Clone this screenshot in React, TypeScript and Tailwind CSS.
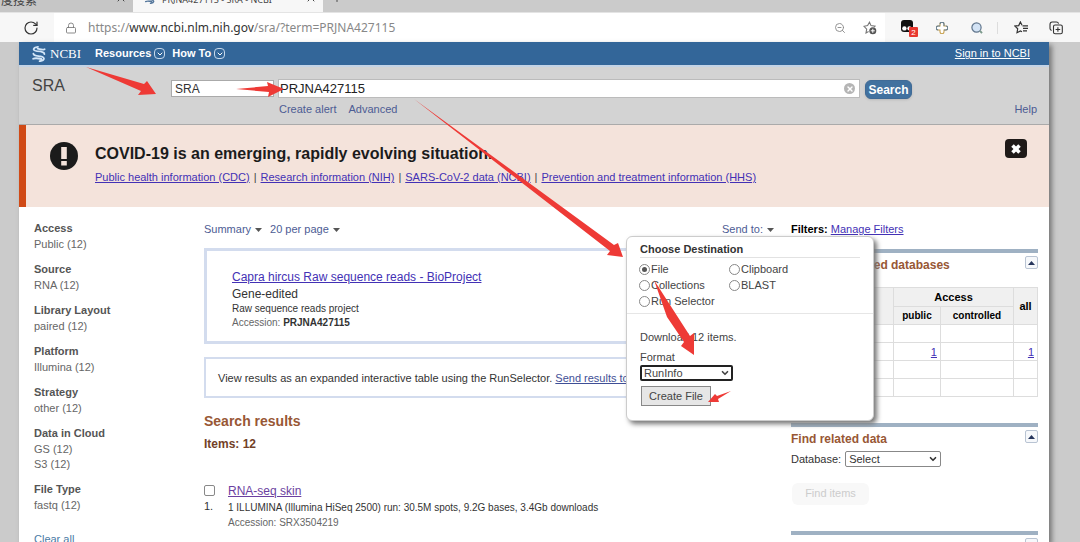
import React from "react";
import {
  ChevronDown,
  Lock,
  Plus,
  RotateCw,
  X,
  ZoomOut,
} from "lucide-react";

const filters = [
  { title: "Access", items: ["Public (12)"] },
  { title: "Source", items: ["RNA (12)"] },
  { title: "Library Layout", items: ["paired (12)"] },
  { title: "Platform", items: ["Illumina (12)"] },
  { title: "Strategy", items: ["other (12)"] },
  { title: "Data in Cloud", items: ["GS (12)", "S3 (12)"] },
  { title: "File Type", items: ["fastq (12)"] },
];

const covidLinks = [
  "Public health information (CDC)",
  "Research information (NIH)",
  "SARS-CoV-2 data (NCBI)",
  "Prevention and treatment information (HHS)",
];

const destinations = ["File", "Clipboard", "Collections", "BLAST", "Run Selector"];

function Caret() {
  return (
    <svg width="7" height="4" viewBox="0 0 7 4" className="mt-px" aria-hidden="true">
      <path d="M0 0h7L3.5 4z" fill="#555" />
    </svg>
  );
}

function Helix({ color, className }: { color: string; className?: string }) {
  return (
    <svg viewBox="0 0 14 16" className={className} aria-hidden="true">
      <path
        d="M6 0.9C0.4 1.6 0.4 4.6 5 5.2 9.6 5.6 12.6 6 12.4 8.2M12.6 3.2C10.4 4.4 8.4 3.2 5.6 2.6M1.4 7.6C1.6 10 5 9.8 8.6 10.4 13.4 11.2 13 14.6 7.6 15.2M1.2 12.8C3.4 11.6 6 12.2 9.4 13"
        fill="none"
        stroke={color}
        strokeWidth="1.8"
        strokeLinecap="round"
      />
    </svg>
  );
}

function BrowserTabs() {
  return (
    <div className="flex h-3 shrink-0 items-end overflow-hidden bg-[#cbcbcb] text-[12px] leading-4 text-[#444]">
      <div className="flex h-5 w-[133px] items-start justify-between bg-[#c6c6c6]">
        <span className="flex h-4 w-[37px] justify-end font-['Noto_Sans_CJK_SC',sans-serif] whitespace-nowrap">
          百度搜索
        </span>
        <X className="mr-1.5 h-3 w-3" strokeWidth={2} />
      </div>
      <div className="flex h-5 w-[190px] items-start bg-[#f7f7f7] pl-[11px]">
        <Helix color="#55779c" className="h-3 w-3" />
        <span className="ml-[6px] flex-1 font-['Noto_Sans',sans-serif] text-[9px] whitespace-nowrap">
          PRJNA427115 - SRA - NCBI
        </span>
        <X className="mr-1.5 h-3 w-3" strokeWidth={2} />
      </div>
      <div className="flex h-5 flex-1 items-start pl-2">
        <Plus className="h-3 w-3" strokeWidth={2} />
      </div>
    </div>
  );
}

function AddressBar() {
  return (
    <div className="flex h-[30px] shrink-0 items-center border-t border-[#e4e4e4] bg-[#f7f7f7] text-[#555]">
      <button aria-label="Reload" className="ml-[23px]">
        <RotateCw className="h-4 w-4 text-[#333]" strokeWidth={1.8} />
      </button>
      <div className="ml-[15px] flex h-full min-w-0 flex-1 items-center bg-white pr-2 pl-[11px]">
        <Lock className="h-3 w-3 text-[#777]" strokeWidth={1.7} />
        <span className="ml-[11px] flex-1 font-['Noto_Sans',sans-serif] text-[12px] text-[#888]">
          https://<span className="text-[#333]">www.ncbi.nlm.nih.gov</span>/sra/?term=PRJNA427115
        </span>
        <button aria-label="Zoom out" className="mr-[17px]">
          <ZoomOut className="h-3 w-3 text-[#888]" strokeWidth={1.8} />
        </button>
        <button aria-label="Add to favorites">
          <svg className="h-[14px] w-[14px]" viewBox="0 0 14 14" aria-hidden="true">
            <path
              d="M5.6 10.4 3 11.9l.7-3.8L1 5.3l3.6-.7 1.9-3.4L8 4.6l4 .5-.8 1"
              fill="none"
              stroke="#777"
              strokeWidth="1.1"
            />
            <circle cx="9.8" cy="9.8" r="3.5" fill="#555" />
            <path d="M9.8 7.8v4M7.8 9.8h4" stroke="#fff" strokeWidth="1" />
          </svg>
        </button>
      </div>
      <div className="flex items-center pr-[17px] pl-4">
        <button aria-label="Extension, 2 notices" className="flex items-end">
          <svg className="h-[18px] w-[17px]" viewBox="0 0 17 18" aria-hidden="true">
            <rect x="0" y="1" width="12" height="12" rx="3" fill="#111" />
            <circle cx="3.4" cy="9.4" r="2.2" fill="#fff" />
            <circle cx="8.4" cy="9.4" r="2.1" fill="#fff" />
            <rect x="8" y="8" width="9" height="10" rx="1" fill="#e8382f" />
            <text x="12.5" y="16" fontSize="8" fill="#fff" textAnchor="middle" fontFamily="Liberation Sans, sans-serif">
              2
            </text>
          </svg>
        </button>
        <button aria-label="Plus extension" className="ml-[18px]">
          <svg className="h-3 w-3" viewBox="0 0 12 12" aria-hidden="true">
            <path
              d="M4 4V2.2a2 2 0 0 1 4 0V4h1.8a2 2 0 0 1 0 4H8v1.8a2 2 0 0 1-4 0V8H2.2a2 2 0 0 1 0-4z"
              fill="#fff"
              stroke="#c9a352"
              strokeWidth="1.1"
            />
            <path d="M8 4V2.2a2 2 0 0 0-4 0M4 4H2.2a2 2 0 0 0 0 4M8 8h1.8a2 2 0 0 0 0-4" fill="none" stroke="#66819a" strokeWidth="1.1" />
          </svg>
        </button>
        <button aria-label="Search extension" className="ml-[23px]">
          <svg className="h-3 w-3" viewBox="0 0 12 12" aria-hidden="true">
            <circle cx="5.5" cy="5.5" r="4.6" fill="#d3e3f5" stroke="#5f748c" strokeWidth="1.2" />
            <path d="m9 8.8 2 2.4" stroke="#7c9a8c" strokeWidth="1.8" />
          </svg>
        </button>
        <span className="ml-[14px] h-3 w-px bg-[#ddd]" />
        <button aria-label="Favorites" className="ml-4">
          <svg className="h-[13px] w-[14px]" viewBox="0 0 14 13" fill="none" stroke="#333" strokeWidth="1.2" aria-hidden="true">
            <path d="M8 4.2 6.4 1 4.7 4.6.9 5.1l2.8 2.7-.7 3.9 3.4-1.8 1.6.8M8.5 4.8H14M9 7.3h5M9 9.8h4" />
          </svg>
        </button>
        <button aria-label="Collections" className="ml-[21px]">
          <svg className="h-[14px] w-[14px]" viewBox="0 0 14 14" fill="none" stroke="#333" strokeWidth="1.1" aria-hidden="true">
            <rect x="4.5" y="4" width="8.8" height="8.8" rx="1.6" />
            <path d="M8.9 6.2v4.6M6.6 8.5h4.6M2.6 9.6C1.6 9.2 1 8.6 1 7.6V3.4C1 2 1.8 1 3.2 1h4.2c1.2 0 1.9.6 2.2 1.6" />
          </svg>
        </button>
      </div>
    </div>
  );
}

function NavItem({ label }: { label: string }) {
  return (
    <button className="flex items-center gap-[3px] font-bold">
      {label}
      <span className="flex h-[11px] w-[11px] items-center justify-center rounded-sm border border-[#c7d8ea]">
        <ChevronDown className="h-2 w-2" strokeWidth={3} />
      </span>
    </button>
  );
}

function SiteHeader() {
  return (
    <header>
      <div className="flex h-[23px] items-center bg-[#336699] pr-[19px] pl-[13px] text-[11px] text-white">
        <a href="#ncbi" className="flex items-center gap-1">
          <Helix color="#d3e6f8" className="h-4 w-[14px]" />
          <span className="font-['Liberation_Serif',serif] text-[13px]">NCBI</span>
        </a>
        <nav className="ml-[14px] flex flex-1 gap-[7px]">
          <NavItem label="Resources" />
          <NavItem label="How To" />
        </nav>
        <a href="#signin" className="underline">
          Sign in to NCBI
        </a>
      </div>
      <div className="flex h-[60px] border-t-2 border-b border-t-[#c3d3e6] border-b-[#aaa] bg-[#d3d3d3] pl-[13px]">
        <h1 className="w-[139px] pt-[9px] text-[16px] leading-5 text-[#444]">SRA</h1>
        <div className="min-w-0 flex-1 pt-3">
          <form className="flex" onSubmit={(e) => e.preventDefault()}>
            <select
              aria-label="Database"
              className="mt-px h-[17px] w-[103px] appearance-none border border-[#aaa] bg-white pl-[3px] text-[12px] leading-[14px] text-[#333]"
            >
              <option>SRA</option>
            </select>
            <div className="ml-1 flex h-[19px] min-w-0 flex-1 items-center border border-[#bbb] bg-white pr-1">
              <input
                aria-label="Search term"
                defaultValue="PRJNA427115"
                className="min-w-0 flex-1 pl-px text-[13px] leading-4 text-[#222]"
              />
              <button
                type="button"
                aria-label="Clear"
                className="flex h-[11px] w-[11px] items-center justify-center rounded-full bg-[#b5b5b5] text-white"
              >
                <X className="h-2 w-2" strokeWidth={4} />
              </button>
            </div>
            <button className="mt-px mr-[137px] ml-[5px] h-[19px] w-[47px] rounded-md border border-[#3f6a96] bg-[#41719f] text-[12px] leading-4 font-bold text-white shadow">
              Search
            </button>
          </form>
          <div className="flex gap-3 pt-px pr-3 pl-[108px] text-[11px] leading-[18px] text-[#4d5c94]">
            <a href="#alert">Create alert</a>
            <a href="#advanced" className="flex-1">
              Advanced
            </a>
            <a href="#help">Help</a>
          </div>
        </div>
      </div>
    </header>
  );
}

function CovidBanner() {
  return (
    <section className="flex h-[82px] items-start border-l-[7px] border-[#d04a16] bg-[#f4e3db] pr-[22px] pl-6">
      <svg className="mt-[17px] h-7 w-7" viewBox="0 0 28 28" aria-hidden="true">
        <circle cx="14" cy="14" r="14" fill="#1b1b1b" />
        <path d="M11.2 5h5.6v12h-5.6zM11.2 19h5.6v4.5h-5.6z" fill="#f4e3db" />
      </svg>
      <div className="ml-[17px] flex-1 pt-[18px]">
        <h2 className="text-[16px] leading-[22px] font-bold text-[#1b1b1b]">
          COVID-19 is an emerging, rapidly evolving situation.
        </h2>
        <p className="mt-1 flex text-[11px] leading-4">
          {covidLinks.map((label, i) => (
            <React.Fragment key={label}>
              {i > 0 && <span className="px-1 text-[#444]">|</span>}
              <a href="#covid" className="text-[#4331b5] underline">
                {label}
              </a>
            </React.Fragment>
          ))}
        </p>
      </div>
      <button
        aria-label="Close"
        className="mt-[14px] flex h-[19px] w-[22px] items-center justify-center rounded-sm bg-[#1f1a18] text-white"
      >
        <X className="h-[14px] w-[14px]" strokeWidth={6} strokeLinecap="butt" />
      </button>
    </section>
  );
}

function Sidebar() {
  return (
    <aside className="flex w-[170px] shrink-0 flex-col gap-[9px] pt-[13px] text-[11px] text-[#666]">
      {filters.map((group) => (
        <div key={group.title}>
          <h3 className="pb-px leading-4 font-bold text-[#555]">{group.title}</h3>
          {group.items.map((item) => (
            <a key={item} href="#filter" className="block leading-[15px]">
              {item}
            </a>
          ))}
        </div>
      ))}
      <a href="#clear" className="mt-[9px] leading-4 text-[#4a7ba5]">
        Clear all
      </a>
    </aside>
  );
}

function SendMenu() {
  return (
    <div className="absolute top-[15px] -right-[100px] z-10 h-[185px] w-[248px] rounded-md border border-[#ccc] bg-white pt-1 text-[11px] text-[#444] shadow-[3px_3px_5px_#777]">
      <div className="px-[13px]">
        <h3 className="border-b border-[#e2e2e2] leading-4 font-bold text-[#333]">Choose Destination</h3>
      </div>
      <fieldset className="grid grid-cols-[90px_1fr] border-b border-[#e6e6e6] pt-[3px] pb-1 pl-3">
        {destinations.map((name, i) => (
          <label key={name} className="flex items-center gap-px leading-4">
            <input
              type="radio"
              name="destination"
              defaultChecked={i === 0}
              className="h-[11px] w-[11px] appearance-none rounded-full border border-[#888] bg-white bg-clip-content p-[2px] checked:bg-[#555]"
            />
            {name}
          </label>
        ))}
      </fieldset>
      <div className="px-[13px] pt-[15px]">
        <p className="leading-4">Download 12 items.</p>
        <label htmlFor="format" className="mt-1 block leading-4">
          Format
        </label>
        <div className="grid w-[93px] items-center">
          <select
            id="format"
            className="col-start-1 row-start-1 h-4 appearance-none rounded-xs border-2 border-[#222] bg-white pl-[2px] text-[11px] leading-3"
          >
            <option>RunInfo</option>
          </select>
          <ChevronDown
            className="pointer-events-none col-start-1 row-start-1 mr-[3px] h-[10px] w-[10px] justify-self-end"
            strokeWidth={4}
          />
        </div>
        <button className="mt-[5px] ml-px h-5 w-[70px] border border-[#888] bg-[#e6e6e6] text-[11px] leading-4">
          Create File
        </button>
      </div>
    </div>
  );
}

function Results() {
  return (
    <main className="min-w-0 flex-1 text-[11px] text-[#333]">
      <div className="flex gap-2 pt-[14px] text-[#4d5c94]">
        <button className="flex items-center gap-1 leading-4">
          Summary <Caret />
        </button>
        <button className="flex items-center gap-1 leading-4">
          20 per page <Caret />
        </button>
        <div className="relative ml-auto">
          <button className="flex items-center gap-1 leading-4">
            Send to: <Caret />
          </button>
          <SendMenu />
        </div>
      </div>
      <section className="mt-[11px] h-[96px] border-[3px] border-[#d3dcee] pt-[17px] pl-[25px]">
        <a href="#bioproject" className="block text-[12px] leading-[18px] text-[#4331b5] underline">
          Capra hircus Raw sequence reads - BioProject
        </a>
        <p className="text-[12px] leading-4">Gene-edited</p>
        <p className="text-[10px] leading-[14px]">Raw sequence reads project</p>
        <p className="text-[10px] leading-[14px] text-[#666]">
          Accession: <b className="text-[#333]">PRJNA427115</b>
        </p>
      </section>
      <section className="mt-[13px] h-[41px] border-2 border-[#d3dcee] pt-[11px] pl-3 text-[11px] leading-4">
        View results as an expanded interactive table using the RunSelector.{" "}
        <a href="#runselector" className="text-[#3f4f96] underline">
          Send results to Run selector
        </a>
      </section>
      <h2 className="mt-[14px] text-[14px] leading-[18px] font-bold text-[#985735]">Search results</h2>
      <h3 className="mt-[6px] text-[12px] leading-4 font-bold text-[#724128]">Items: 12</h3>
      <article className="mt-[30px] flex">
        <div className="w-6">
          <input
            type="checkbox"
            aria-label="Select RNA-seq skin"
            className="mt-[3px] block h-[11px] w-[11px] appearance-none rounded-xs border border-[#888] bg-white"
          />
          <span className="mt-[2px] block leading-4">1.</span>
        </div>
        <div>
          <a href="#rna" className="block text-[12px] leading-[18px] text-[#6b3fa0] underline">
            RNA-seq skin
          </a>
          <p className="text-[10px] leading-4">
            1 ILLUMINA (Illumina HiSeq 2500) run: 30.5M spots, 9.2G bases, 3.4Gb downloads
          </p>
          <p className="text-[10px] leading-[14px] text-[#666]">Accession: SRX3504219</p>
        </div>
      </article>
    </main>
  );
}

function PanelHeading({ children }: { children: React.ReactNode }) {
  return (
    <div className="flex items-start justify-between border-t-4 border-[#9fb1c3] pt-[3px]">
      <h3 className="pt-px text-[12px] leading-4 font-bold text-[#985735]">{children}</h3>
      <button
        aria-label="Collapse"
        className="flex h-[13px] w-[13px] items-center justify-center rounded-xs border border-[#b9c4d3] bg-[#f6f8fb]"
      >
        <svg width="7" height="4" viewBox="0 0 7 4" aria-hidden="true">
          <path d="M0 4h7L3.5 0z" fill="#26355c" />
        </svg>
      </button>
    </div>
  );
}

function RelatedColumn() {
  const rows = ["", "1", "", ""];
  return (
    <aside className="ml-[17px] w-[247px] shrink-0 pt-[14px] text-[11px] text-[#333]">
      <p className="mb-3 leading-4">
        <b className="text-black">Filters:</b>{" "}
        <a href="#filters" className="text-[#4331b5] underline">
          Manage Filters
        </a>
      </p>
      <PanelHeading>Search in related databases</PanelHeading>
      <table className="mt-[14px] w-full table-fixed border-collapse border border-[#ddd] [&_td]:border [&_td]:border-[#ddd] [&_th]:border [&_th]:border-[#ddd]">
        <colgroup>
          <col />
          <col className="w-[47px]" />
          <col className="w-[73px]" />
          <col className="w-[24px]" />
        </colgroup>
        <thead className="bg-[#f0f0f0] text-black">
          <tr className="h-[19px] leading-4">
            <th rowSpan={2}>Database</th>
            <th colSpan={2}>Access</th>
            <th rowSpan={2}>all</th>
          </tr>
          <tr className="h-[18px] text-[10px] leading-4">
            <th>public</th>
            <th>controlled</th>
          </tr>
        </thead>
        <tbody>
          {rows.map((count, i) => (
            <tr key={i} className="h-[18px] text-right leading-4">
              <td />
              <td className="pr-[3px]">
                {count && (
                  <a href="#public" className="text-[#4331b5] underline">
                    {count}
                  </a>
                )}
              </td>
              <td />
              <td className="pr-[3px]">
                {count && (
                  <a href="#all" className="text-[#4331b5] underline">
                    {count}
                  </a>
                )}
              </td>
            </tr>
          ))}
        </tbody>
      </table>
      <div className="mt-[26px]">
        <PanelHeading>Find related data</PanelHeading>
        <div className="mt-1 flex items-center">
          <label htmlFor="related">Database:</label>
          <div className="ml-1 grid w-24 items-center">
            <select
              id="related"
              className="col-start-1 row-start-1 h-4 appearance-none rounded-xs border border-[#888] bg-white pl-[3px] text-[11px] leading-3"
            >
              <option>Select</option>
            </select>
            <ChevronDown
              className="pointer-events-none col-start-1 row-start-1 mr-[3px] h-[10px] w-[10px] justify-self-end"
              strokeWidth={4}
            />
          </div>
        </div>
        <button className="mt-[15px] ml-px h-[22px] w-[77px] rounded-md bg-[#f8f8f8] text-[#ccc]">Find items</button>
      </div>
      <div className="mt-[26px]">
        <PanelHeading>Search details</PanelHeading>
      </div>
    </aside>
  );
}

function Annotations() {
  return (
    <svg
      className="pointer-events-none absolute top-0 left-0 z-20 h-[542px] w-[1080px]"
      viewBox="0 0 1080 542"
      fill="#ee3a36"
      aria-hidden="true"
    >
      <path d="M86 67 144 84 147 81 156 94 138 95 141 91Z" />
      <path d="M236 89 268 86 267 82 284 89 268 97 269 92Z" />
      <path d="M414 99 614 245 618 243 623 257 607 255 610 251Z" />
      <path d="M654 280 690 336 694 333 694 355 681 346 684 342 667 317Z" />
      <path d="M731 391 717 396 715 394 708 402 719 402 718 399Z" />
    </svg>
  );
}

export default function App() {
  return (
    <div className="relative flex h-screen flex-col overflow-hidden bg-[#cbcbcb] font-['Liberation_Sans',Arial,sans-serif]">
      <BrowserTabs />
      <AddressBar />
      <div className="mr-[31px] ml-[19px] min-h-0 flex-1 bg-white shadow-[3px_3px_5px_#777]">
        <SiteHeader />
        <CovidBanner />
        <div className="flex pr-[11px] pl-[15px]">
          <Sidebar />
          <Results />
          <RelatedColumn />
        </div>
      </div>
      <Annotations />
    </div>
  );
}
